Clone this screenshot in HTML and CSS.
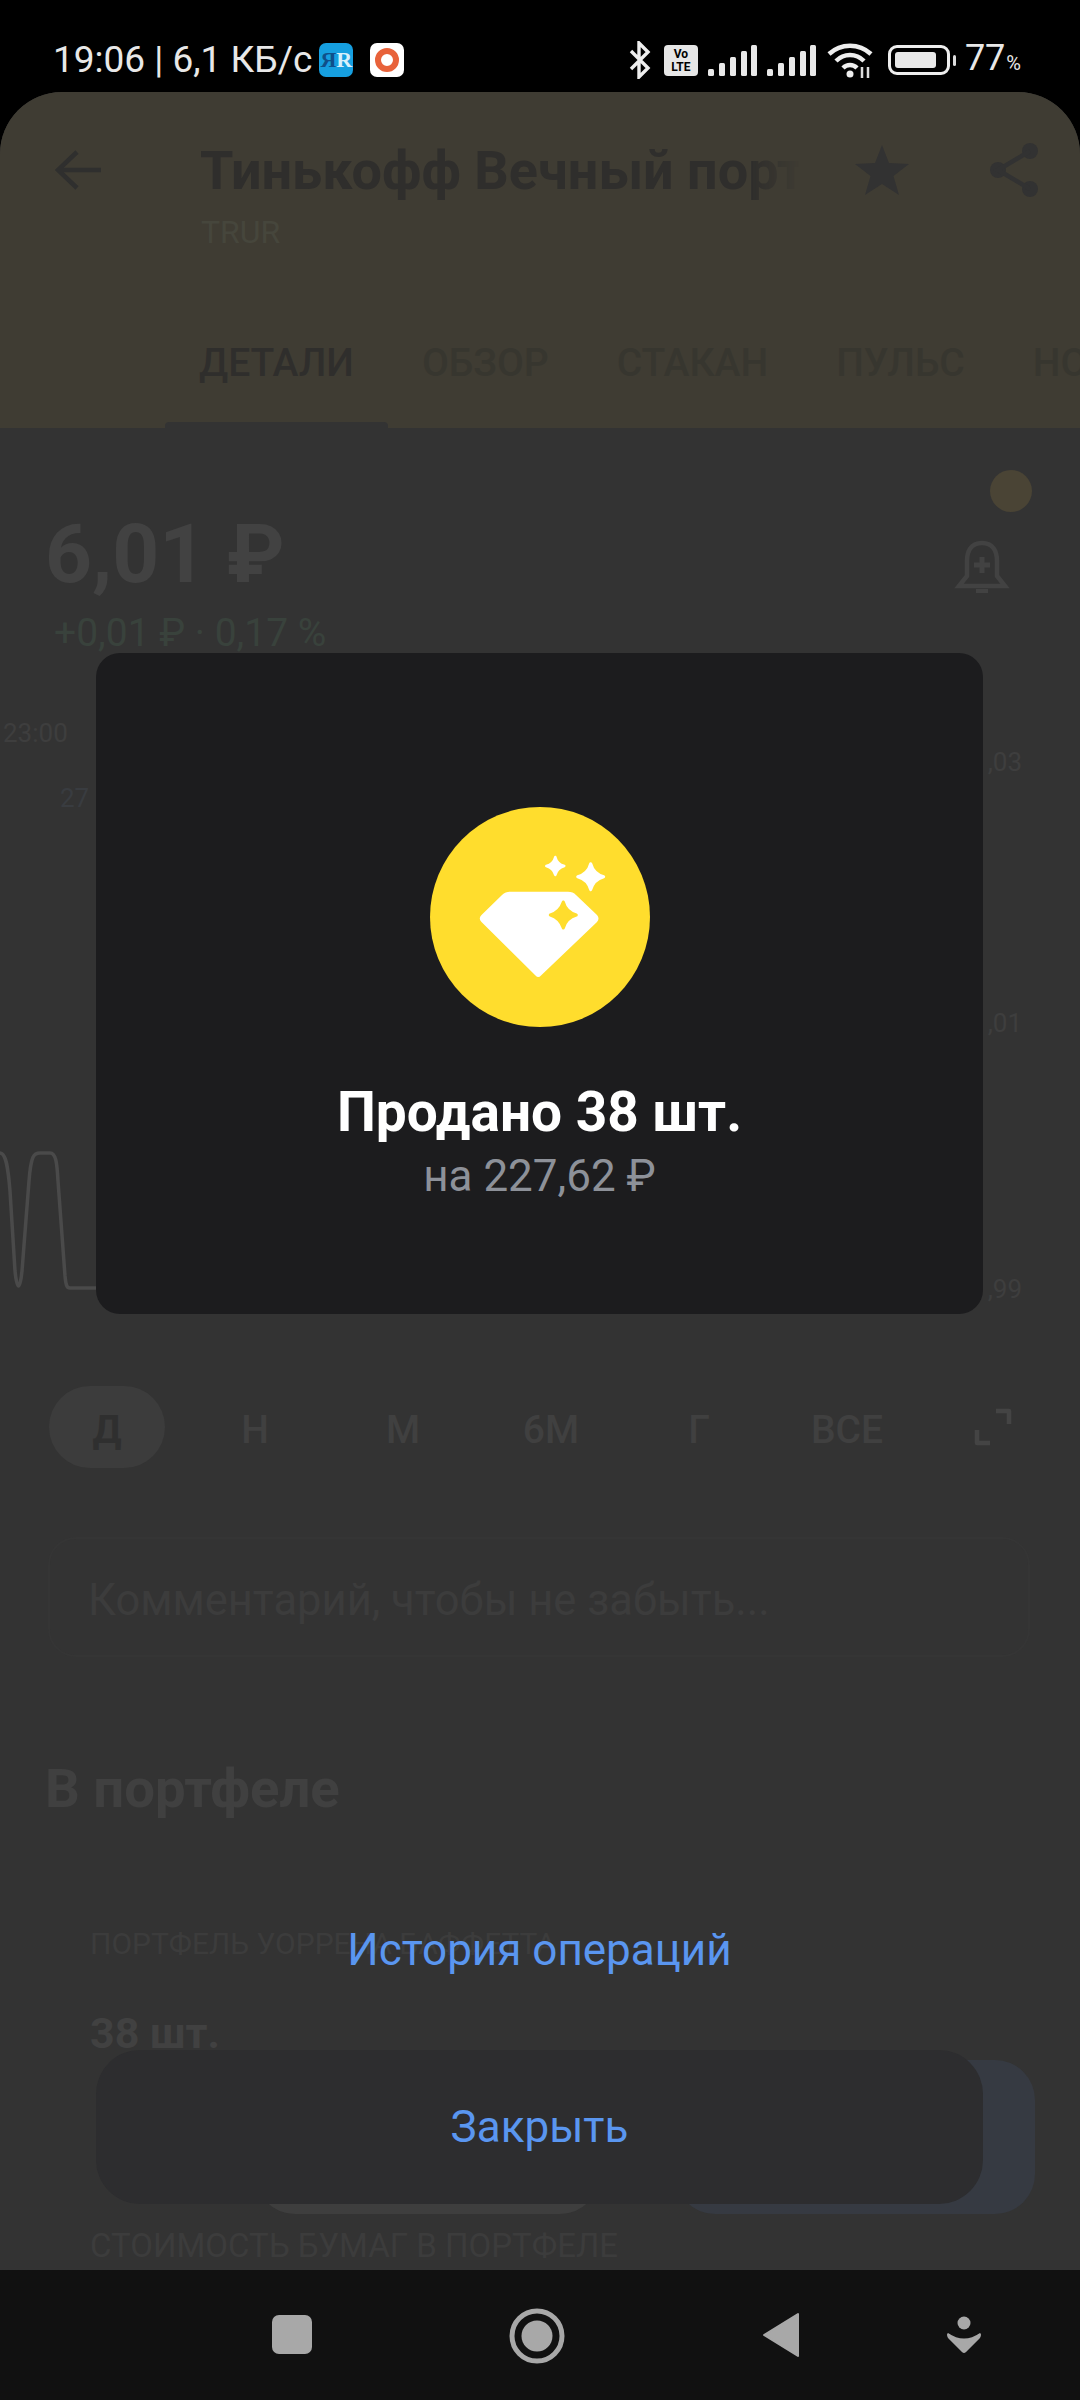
FILE: index.html
```html
<!DOCTYPE html>
<html lang="ru">
<head>
  <meta charset="UTF-8">
  <meta name="viewport" content="width=device-width, initial-scale=1.0">
  <title>Продано 38 шт.</title>
  <link rel="stylesheet" href="styles.css">
</head>
<body>
  <div class="phone">
    <div class="status">
      <span class="status-text">19:06 | 6,1 КБ/с</span>
      <span class="app-icon app-blue"><span class="ya">Я</span><span class="er">R</span></span>
      <span class="app-icon app-white"><span class="ring"></span></span>
      <div class="status-right">
        <svg class="ic-bt" viewBox="0 0 22 38"><path d="M2 10 19 27 10 36V2L19 11 2 28" fill="none" stroke="#eee" stroke-width="3.4"/></svg>
        <span class="volte">Vo<br>LTE</span>
        <svg class="ic-signal" viewBox="0 0 49 31"><g fill="#e8e8e8"><rect x="0" y="24" width="6" height="7" rx="1.5"/><rect x="11" y="18" width="6" height="13" rx="1.5"/><rect x="22" y="12" width="6" height="19" rx="1.5"/><rect x="33" y="6" width="6" height="25" rx="1.5"/><rect x="43" y="0" width="6" height="31" rx="1.5"/></g></svg>
        <svg class="ic-signal" viewBox="0 0 49 31"><g fill="#e8e8e8"><rect x="0" y="24" width="6" height="7" rx="1.5"/><rect x="11" y="18" width="6" height="13" rx="1.5"/><rect x="22" y="12" width="6" height="19" rx="1.5"/><rect x="33" y="6" width="6" height="25" rx="1.5"/><rect x="43" y="0" width="6" height="31" rx="1.5"/></g></svg>
        <svg class="ic-wifi" viewBox="0 0 46 36"><g fill="none" stroke="#eee" stroke-width="4.5"><path d="M2 12C14 1 32 1 44 12"/><path d="M9 19C17 11 29 11 37 19"/><path d="M16 26C20 22 26 22 30 26"/></g><circle cx="23" cy="32" r="3.5" fill="#eee"/><path d="M35 25v11M41 25v11" stroke="#ddd" stroke-width="2.5"/></svg>
        <span class="battery"><span class="battery-fill"></span></span>
        <span class="battery-nub"></span>
        <span class="status-pct">77<small>%</small></span>
      </div>
    </div>

    <div class="sheet">
      <div class="top-bar">
        <div class="title-row">
          <svg class="ic-back" viewBox="0 0 46 42"><path d="M22 3 3 21 22 39M3 21H46" fill="none" stroke="#2f2f2e" stroke-width="4.5"/></svg>
          <div class="title">Тинькофф Вечный портфель</div>
          <svg class="ic-star" viewBox="0 0 54 50"><path d="M27 0 34 18 54 19 38.500 31 44 50 27 39 10 50 15.500 31 0 19 20 18Z" fill="#323232"/></svg>
          <svg class="ic-share" viewBox="0 0 48 54"><g fill="#323232"><circle cx="40" cy="8" r="8"/><circle cx="8" cy="27" r="8"/><circle cx="40" cy="46" r="8"/></g><path d="M40 8 8 27 40 46" fill="none" stroke="#323232" stroke-width="4.500"/></svg>
        </div>
        <div class="ticker">TRUR</div>
        <div class="tabs">
          <span class="tab tab-active">ДЕТАЛИ</span>
          <span class="tab">ОБЗОР</span>
          <span class="tab">СТАКАН</span>
          <span class="tab">ПУЛЬС</span>
          <span class="tab">НОВОСТИ</span>
        </div>
      </div>

      <div class="content">
        <div class="price-block">
          <div class="price-left">
            <div class="price">6,01 ₽</div>
            <div class="change">+0,01 ₽ · 0,17 %</div>
          </div>
          <div class="price-right">
            <span class="coin"></span>
            <svg class="ic-bell" viewBox="0 0 56 56"><path d="M28 3C17 3 13 11 13 21V36L5 46H51L43 36V21C43 11 39 3 28 3Z" fill="none" stroke="#424242" stroke-width="4.500"/><path d="M28 17V33M20 25H36" stroke="#424242" stroke-width="5"/><path d="M22 51H34" stroke="#424242" stroke-width="4"/></svg>
          </div>
        </div>

        <div class="chart">
          <span class="axis axis-time">23:00</span>
          <span class="axis axis-mark">27</span>
          <span class="axis axis-a">,03</span>
          <span class="axis axis-b">,01</span>
          <span class="axis axis-c">,99</span>
          <svg class="chart-line" viewBox="0 0 100 140"><path d="M0 2C6 2 8 16 10 40L15 120C17 140 20 140 22 120L29 30C31 4 34 2 40 2H50C56 2 57 12 58 30L65 125C66 135 67 137 70 137H100" fill="none" stroke="#4a4a4a" stroke-width="3.500"/></svg>
        </div>

        <div class="periods">
          <span class="period period-active">Д</span>
          <span class="period">Н</span>
          <span class="period">М</span>
          <span class="period">6М</span>
          <span class="period">Г</span>
          <span class="period">ВСЕ</span>
          <svg class="ic-expand" viewBox="0 0 38 38"><path d="M22 3H35V16M3 22V35H16" fill="none" stroke="#444" stroke-width="4.500" stroke-linejoin="round"/></svg>
        </div>

        <div class="comment">Комментарий, чтобы не забыть...</div>

        <h2 class="section-title">В портфеле</h2>

        <div class="holding">
          <div class="holding-label">ПОРТФЕЛЬ УОРРЕНА БАФФЕТТА</div>
          <div class="holding-qty">38 шт.</div>
          <div class="holding-buttons">
            <span class="hold-btn hold-grey"></span>
            <span class="hold-btn hold-blue"></span>
          </div>
          <div class="holding-label holding-cost">СТОИМОСТЬ БУМАГ В ПОРТФЕЛЕ</div>
        </div>
      </div>
    </div>

    <div class="nav">
      <span class="nav-square"></span>
      <svg class="nav-home" viewBox="0 0 56 56"><circle cx="28" cy="28" r="25" fill="none" stroke="#a8a8a8" stroke-width="5"/><circle cx="28" cy="28" r="15.500" fill="#a8a8a8"/></svg>
      <svg class="nav-back" viewBox="0 0 38 46"><path d="M36 2V44L2 23Z" fill="#a8a8a8" stroke="#a8a8a8" stroke-width="2" stroke-linejoin="round"/></svg>
      <svg class="nav-assist" viewBox="0 0 36 38"><circle cx="18" cy="7" r="6.500" fill="#a8a8a8"/><path d="M2 17Q18 28 34 17Q36 18 34 22L20 36Q18 38 16 36L2 22Q0 18 2 17Z" fill="#a8a8a8"/></svg>
    </div>

    <div class="overlay">
      <div class="dialog">
        <svg class="gem" viewBox="0 0 220 220">
          <circle cx="110" cy="110" r="110" fill="#ffdd2d"/>
          <path d="M80 84.700H138Q143 84.700 146 88L167 108Q170 111.500 167 115L111 168.500Q108.300 171.500 105.500 168.500L51.500 115Q48 111.500 51.500 108L72 88Q75.500 84.700 80 84.700Z" fill="#fff"/>
          <path d="M133.300 95Q136 105 146.300 108Q136 111 133.300 121Q130 111 120.300 108Q130 105 133.300 95Z" fill="#ffdd2d" stroke="#ffdd2d" stroke-width="3" stroke-linejoin="round"/>
          <path d="M160.700 56.700Q163.500 67 173.700 69.700Q163.500 72.500 160.700 82.700Q158 72.500 147.700 69.700Q158 67 160.700 56.700Z" fill="#fff" stroke="#fff" stroke-width="3" stroke-linejoin="round"/>
          <path d="M125.300 50Q127 57 134.300 59Q127 61 125.300 68Q123.500 61 116.300 59Q123.500 57 125.300 50Z" fill="#fff" stroke="#fff" stroke-width="2.500" stroke-linejoin="round"/>
        </svg>
        <div class="dialog-title">Продано 38 шт.</div>
        <div class="dialog-sub">на 227,62 ₽</div>
      </div>
      <a class="history-link">История операций</a>
      <button class="close-btn">Закрыть</button>
    </div>
  </div>
</body>
</html>
```

FILE: styles.css
```css
* {
  box-sizing: border-box;
}
body {
  margin: 0;
  background-color: #000;
  font-family: Roboto, "Liberation Sans", sans-serif;
}
.phone {
  position: relative;
  display: flex;
  flex-direction: column;
  width: 1080px;
  height: 2400px;
  overflow: hidden;
  background-color: #000;
}

/* status bar */
.status {
  display: flex;
  align-items: center;
  flex-shrink: 0;
  height: 92px;
  padding: 28px 59px 0 53px;
  color: #e8e8e8;
}
.status-text {
  font-size: 37px;
  line-height: 42px;
  white-space: nowrap;
}
.app-icon {
  display: flex;
  align-items: center;
  justify-content: center;
  width: 34px;
  height: 34px;
  border-radius: 7px;
}
.app-blue {
  margin-left: 7px;
  background-color: #169fe0;
  font-family: "Liberation Serif", serif;
  font-size: 22px;
  font-weight: 700;
}
.ya {
  color: #0f4f8a;
}
.er {
  color: #d8f0fb;
}
.app-white {
  margin-left: 17px;
  background-color: #fff;
}
.ring {
  width: 24px;
  height: 24px;
  border: 6px solid #e8623a;
  border-radius: 50%;
}
.status-right {
  display: flex;
  align-items: center;
  margin-left: auto;
}
.ic-bt {
  width: 22px;
  height: 38px;
}
.volte {
  width: 34px;
  height: 31px;
  margin-left: 13px;
  border-radius: 4px;
  background-color: #e6e6e6;
  color: #000;
  font-size: 12px;
  font-weight: 700;
  line-height: 13px;
  text-align: center;
  padding-top: 3px;
}
.ic-signal {
  width: 49px;
  height: 31px;
  margin-left: 10px;
}
.ic-wifi {
  width: 46px;
  height: 36px;
  margin-left: 11px;
}
.battery {
  display: flex;
  align-items: center;
  width: 62px;
  height: 30px;
  margin-left: 15px;
  padding: 4px;
  border: 3px solid #eee;
  border-radius: 9px;
}
.battery-fill {
  width: 41px;
  height: 100%;
  border-radius: 3px;
  background-color: #e8e8e8;
}
.battery-nub {
  width: 3px;
  height: 11px;
  margin-left: 3px;
  border-radius: 2px;
  background-color: #ddd;
}
.status-pct {
  margin-left: 9px;
  font-size: 36px;
  line-height: 42px;
}
.status-pct small {
  font-size: 20px;
  margin-left: 1px;
}

/* page behind the dialog */
.sheet {
  flex: 1;
  min-height: 0;
  overflow: hidden;
  border-radius: 62px 62px 0 0;
  background-color: #333;
}
.top-bar {
  position: relative;
  height: 336px;
  background-color: #3f3c33;
}
.title-row {
  display: flex;
  align-items: center;
  height: 100px;
  padding: 56px 42px 0 55px;
}
.ic-back {
  flex-shrink: 0;
  width: 46px;
  height: 42px;
}
.title {
  width: 600px;
  margin-left: 99px;
  overflow: hidden;
  color: #2f2e2c;
  font-size: 54px;
  font-weight: 700;
  white-space: nowrap;
  -webkit-mask-image: linear-gradient(to right, #000 92%, transparent 100%);
  mask-image: linear-gradient(to right, #000 92%, transparent 100%);
}
.ic-star {
  flex-shrink: 0;
  width: 54px;
  height: 50px;
  margin-left: 55px;
}
.ic-share {
  flex-shrink: 0;
  width: 48px;
  height: 54px;
  margin-left: 81px;
}
.ticker {
  margin: 21px 0 0 201px;
  color: #46463c;
  font-size: 32px;
  line-height: 38px;
}
.tabs {
  display: flex;
  gap: 68px;
  margin: 90px 0 0 199px;
  white-space: nowrap;
}
.tab {
  color: #37362f;
  font-size: 39px;
  font-weight: 500;
  line-height: 44px;
}
.tab-active {
  position: relative;
  color: #2f2e2c;
}
.tab-active::after {
  content: "";
  position: absolute;
  left: -34px;
  right: -34px;
  bottom: -43px;
  height: 6px;
  border-radius: 4px 4px 0 0;
  background-color: #333;
}
.content {
  height: 1842px;
}
.price-block {
  display: flex;
  justify-content: space-between;
  height: 240px;
  padding: 42px 48px 0 45px;
}
.price-left {
  padding-top: 42px;
}
.price {
  color: #424242;
  font-size: 82px;
  font-weight: 700;
  line-height: 84px;
}
.change {
  margin: 17px 0 0 9px;
  color: #39423c;
  font-size: 39px;
  line-height: 40px;
}
.price-right {
  display: flex;
  flex-direction: column;
  align-items: flex-end;
}
.coin {
  width: 42px;
  height: 42px;
  border-radius: 50%;
  background-color: #4a4435;
}
.ic-bell {
  width: 56px;
  height: 56px;
  margin: 28px 22px 0 0;
}
.chart {
  position: relative;
  height: 718px;
}
.axis {
  position: absolute;
  color: #3e3e3e;
  font-size: 26px;
  line-height: 30px;
}
.axis-time {
  left: 3px;
  top: 50px;
}
.axis-mark {
  left: 60px;
  top: 115px;
  color: #393c40;
}
.axis-a {
  right: 58px;
  top: 79px;
}
.axis-b {
  right: 58px;
  top: 340px;
}
.axis-c {
  right: 58px;
  top: 606px;
}
.chart-line {
  position: absolute;
  left: 0;
  top: 483px;
  width: 100px;
  height: 140px;
}
.periods {
  display: flex;
  align-items: center;
  gap: 32px;
  height: 82px;
  padding: 0 68px 0 49px;
}
.period {
  display: flex;
  align-items: center;
  justify-content: center;
  width: 116px;
  height: 82px;
  border-radius: 41px;
  color: #404040;
  font-size: 39px;
  font-weight: 500;
  padding-top: 6px;
}
.period-active {
  background-color: #3c3c3c;
  color: #2f2f2f;
  font-weight: 700;
}
.ic-expand {
  flex-shrink: 0;
  width: 38px;
  height: 38px;
  margin-left: auto;
}
.comment {
  height: 120px;
  margin: 69px 50px 0 48px;
  padding: 0 38px;
  border: 2px solid #353535;
  border-radius: 28px;
  color: #3c3c3c;
  font-size: 43.5px;
  line-height: 124px;
  white-space: nowrap;
}
.section-title {
  margin: 96px 0 0 45px;
  color: #404040;
  font-size: 54.5px;
  font-weight: 700;
  line-height: 70px;
}
.holding {
  padding: 0 45px 0 90px;
}
.holding-label {
  margin-top: 101px;
  color: #3c3c3c;
  font-size: 30px;
  line-height: 40px;
  white-space: nowrap;
}
.holding-qty {
  margin-top: 45px;
  color: #414141;
  font-size: 43px;
  font-weight: 700;
  line-height: 48px;
}
.holding-buttons {
  display: flex;
  gap: 75px;
  height: 154px;
  margin-top: 3px;
  padding-left: 165px;
}
.hold-btn {
  border-radius: 40px;
}
.hold-grey {
  width: 345px;
  background-color: #3e3e3e;
}
.hold-blue {
  width: 360px;
  background-color: #363a42;
}
.holding-cost {
  margin-top: 12px;
  font-size: 33px;
}

/* nav bar */
.nav {
  position: relative;
  flex-shrink: 0;
  height: 130px;
  background-color: #111;
}
.nav-square {
  position: absolute;
  left: 272px;
  top: 45px;
  width: 40px;
  height: 39px;
  border-radius: 7px;
  background-color: #a8a8a8;
}
.nav-home {
  position: absolute;
  left: 509px;
  top: 38px;
  width: 56px;
  height: 56px;
}
.nav-back {
  position: absolute;
  left: 762px;
  top: 42px;
  width: 38px;
  height: 46px;
}
.nav-assist {
  position: absolute;
  left: 946px;
  top: 46px;
  width: 36px;
  height: 38px;
}

/* dialog */
.overlay {
  position: absolute;
  inset: 0;
  display: flex;
  flex-direction: column;
  align-items: center;
  padding: 653px 97px 0 96px;
}
.dialog {
  display: flex;
  flex-direction: column;
  align-items: center;
  width: 100%;
  height: 661px;
  padding-top: 154px;
  border-radius: 24px;
  background-color: #1c1c1e;
}
.gem {
  width: 220px;
  height: 220px;
}
.dialog-title {
  margin-top: 54px;
  color: #fff;
  font-size: 55px;
  font-weight: 700;
  line-height: 62px;
}
.dialog-sub {
  margin-top: 8px;
  color: #8d9199;
  font-size: 44px;
  line-height: 50px;
}
.history-link {
  margin-top: 610px;
  color: #5a96f0;
  font-size: 44px;
  line-height: 52px;
}
.close-btn {
  width: 100%;
  height: 154px;
  margin-top: 74px;
  border: none;
  border-radius: 44px;
  background-color: #2d2d2f;
  color: #5a96f0;
  font-family: inherit;
  font-size: 44px;
}
```
